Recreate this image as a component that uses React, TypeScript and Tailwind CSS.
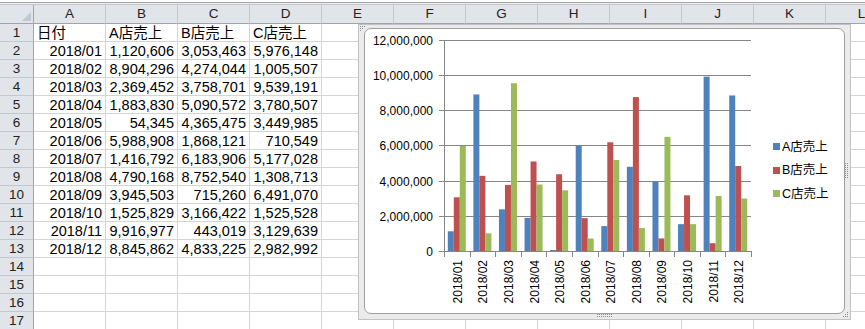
import React from "react";

const data: string[][] = [
  ["2018/01", "1,120,606", "3,053,463", "5,976,148"],
  ["2018/02", "8,904,296", "4,274,044", "1,005,507"],
  ["2018/03", "2,369,452", "3,758,701", "9,539,191"],
  ["2018/04", "1,883,830", "5,090,572", "3,780,507"],
  ["2018/05", "54,345", "4,365,475", "3,449,985"],
  ["2018/06", "5,988,908", "1,868,121", "710,549"],
  ["2018/07", "1,416,792", "6,183,906", "5,177,028"],
  ["2018/08", "4,790,168", "8,752,540", "1,308,713"],
  ["2018/09", "3,945,503", "715,260", "6,491,070"],
  ["2018/10", "1,525,829", "3,166,422", "1,525,528"],
  ["2018/11", "9,916,977", "443,019", "3,129,639"],
  ["2018/12", "8,845,862", "4,833,225", "2,982,992"],
];

const colLetters = ["A", "B", "C", "D", "E", "F", "G", "H", "I", "J", "K", "L"];
const headerRow = ["日付", "A店売上", "B店売上", "C店売上"];
const seriesColors = ["#4F81BD", "#C0504D", "#9BBB59"];
const seriesNames = ["A店売上", "B店売上", "C店売上"];

const toNum = (s: string) => Number(s.replace(/,/g, ""));

function Cell({ r, c }: { r: number; c: number }) {
  let content: string = "";
  let right = false;
  if (r === 1 && c < 4) content = headerRow[c];
  if (r >= 2 && r <= 13 && c < 4) {
    content = data[r - 2][c];
    right = true;
  }
  return (
    <div
      className={`h-[18px] border-r border-b border-[#d4d4d4] overflow-hidden whitespace-nowrap text-[14.5px] leading-[17px] pt-[1px] text-black ${
        right ? "text-right pr-[3px]" : "text-left pl-[3px]"
      }`}
    >
      {content}
    </div>
  );
}

function Chart() {
  const left = 444;
  const right = 751;
  const base = 251;
  const top = 40;
  const cw = (right - left) / 12;
  const gridYs = [251, 216, 181, 145, 110, 75, 40];
  const labels = ["0", "2,000,000", "4,000,000", "6,000,000", "8,000,000", "10,000,000", "12,000,000"];
  const scale = (base - top) / 12000000;
  return (
    <svg width={408} height={284} className="block shrink-0">
      <g transform="translate(-365 -29)">
        {gridYs.slice(1).map((y) => (
          <line key={y} x1={left} x2={right} y1={y + 0.5} y2={y + 0.5} stroke="#868686" strokeWidth={1} />
        ))}
        {data.map((row, i) =>
          [1, 2, 3].map((j) => {
            const v = toNum(row[j]);
            const h = v * scale;
            const x = left + i * cw + (cw - 18) / 2 + (j - 1) * 6;
            return <rect key={`${i}-${j}`} x={x} y={base - h} width={6} height={h} fill={seriesColors[j - 1]} />;
          })
        )}
        <line x1={left + 0.5} x2={left + 0.5} y1={top} y2={base + 1} stroke="#868686" />
        <line x1={left} x2={right} y1={base + 0.5} y2={base + 0.5} stroke="#868686" />
        {gridYs.map((y) => (
          <line key={`t${y}`} x1={439} x2={left} y1={y + 0.5} y2={y + 0.5} stroke="#868686" />
        ))}
        {Array.from({ length: 13 }).map((_, i) => {
          const x = Math.round(left + i * cw) + 0.5;
          return <line key={`xt${i}`} x1={x} x2={x} y1={base} y2={257} stroke="#868686" />;
        })}
        {gridYs.map((y, k) => (
          <text
            key={`l${k}`}
            x={433}
            y={y + 5}
            textAnchor="end"
            fontSize={12}
            fontFamily="'Liberation Sans', 'Noto Sans CJK JP', sans-serif"
            fill="#000"
          >
            {labels[k]}
          </text>
        ))}
        {data.map((row, i) => {
          const cx = left + (i + 0.5) * cw;
          return (
            <text
              key={`x${i}`}
              transform={`translate(${cx + 5} 260) rotate(-90)`}
              textAnchor="end"
              fontSize={12}
              fontFamily="'Liberation Sans', 'Noto Sans CJK JP', sans-serif"
              fill="#000"
            >
              {row[0]}
            </text>
          );
        })}
      </g>
    </svg>
  );
}

function Dots({ pts, w, h }: { pts: [number, number][]; w: number; h: number }) {
  return (
    <svg width={w} height={h} className="block">
      {pts.map(([x, y], i) => (
        <rect key={i} x={x} y={y} width={1} height={1} fill="#8c8c8c" />
      ))}
    </svg>
  );
}

export default function App() {
  const rows = Array.from({ length: 17 }, (_, i) => i + 1);
  const hDots: [number, number][] = [];
  for (let k = 0; k < 4; k++) {
    hDots.push([k * 4, 0], [k * 4 + 2, 0], [k * 4, 2], [k * 4 + 2, 2]);
  }
  const vDots: [number, number][] = [];
  for (let k = 0; k < 4; k++) {
    vDots.push([0, k * 4], [2, k * 4], [0, k * 4 + 2], [2, k * 4 + 2]);
  }
  const corner: [number, number][] = [
    [0, 0], [2, 0], [4, 0], [0, 2], [2, 2], [0, 4],
  ];
  const cornerBR: [number, number][] = [
    [4, 0], [2, 2], [4, 2], [0, 4], [2, 4], [4, 4],
  ];
  return (
    <div className="relative w-[865px] h-[329px] overflow-hidden bg-white font-['Liberation_Sans','Noto_Sans_CJK_JP',sans-serif]">
      <div className="flex flex-col">
        <div className="h-[2px] bg-white" />
        <div className="h-[1px] bg-[#a3a3a3]" />
        <div className="h-[1px] bg-[#eeeeee]" />
        <div className="h-[1px] bg-[#c4c8cd]" />
        <div className="grid grid-cols-[34px_repeat(12,72px)]">
          <div className="h-[19px] bg-[#e1e5ea] border-r border-b border-[#9ea5ae] flex items-end justify-end pr-[2px] pb-[2px]">
            <svg width={9} height={9} className="block">
              <polygon points="9,0 9,9 0,9" fill="#c3c8ce" />
            </svg>
          </div>
          {colLetters.map((l) => (
            <div
              key={l}
              className="h-[19px] bg-[#e1e5ea] border-r border-[#c3c8cf] border-b border-b-[#9ea5ae] text-center text-[13.5px] leading-[18px] text-[#222]"
            >
              {l}
            </div>
          ))}
          {rows.map((r) => (
            <React.Fragment key={r}>
              <div className="h-[18px] bg-[#e1e5ea] border-r border-r-[#9ea5ae] border-b border-[#c3c8cf] text-center text-[13.5px] leading-[18px] text-[#222]">
                {r}
              </div>
              {colLetters.map((_, c) => (
                <Cell key={c} r={r} c={c} />
              ))}
            </React.Fragment>
          ))}
        </div>
      </div>

      <div className="absolute left-[358px] top-[24px] w-[493px] h-[296px] bg-[#ebebeb] border border-[#c2c2c2] px-[5px] pt-[3px] pb-[5px]">
        <div className="h-full bg-white border border-[#9f9f9f] rounded-[7px] flex flex-row overflow-hidden">
          <Chart />
          <div className="flex flex-col justify-center pb-[2px]">
            {seriesNames.map((n, i) => (
              <div key={n} className="flex flex-row items-center h-[23.5px]">
                <div className="w-[7px] h-[7px] mr-[2px]" style={{ backgroundColor: seriesColors[i] }} />
                <span className="text-[12.5px] leading-[16px] text-black whitespace-nowrap">{n}</span>
              </div>
            ))}
          </div>
        </div>
        <div className="absolute left-[238px] bottom-[1px]">
          <Dots pts={hDots} w={16} h={4} />
        </div>
        <div className="absolute right-[1px] top-[138px]">
          <Dots pts={vDots} w={4} h={16} />
        </div>
        <div className="absolute left-[1px] top-[1px]">
          <Dots pts={corner} w={6} h={6} />
        </div>
        <div className="absolute right-[1px] bottom-[1px]">
          <Dots pts={cornerBR} w={6} h={6} />
        </div>
      </div>
    </div>
  );
}
